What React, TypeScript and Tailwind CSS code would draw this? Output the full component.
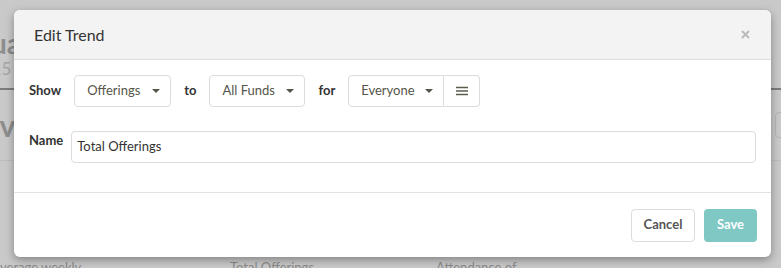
import { ReactNode } from "react";

const FONT = "font-['Lato','Open_Sans','Liberation_Sans',sans-serif]";

function Caret() {
  return (
    <svg width="8" height="4" viewBox="0 0 8 4" className="shrink-0">
      <path d="M0 0h8L4 4z" fill="#555549" />
    </svg>
  );
}

function Select({ label, w }: { label: string; w: string }) {
  return (
    <div
      className={`flex h-[32px] ${w} items-center justify-between rounded-[4px] border border-[#dcdcdc] bg-white pl-[12px] pr-[10px] text-[13px] text-[#555549]`}
    >
      <span>{label}</span>
      <Caret />
    </div>
  );
}

function Label({ children }: { children: ReactNode }) {
  return <span className="text-[13px] font-bold text-[#333]">{children}</span>;
}

export default function App() {
  return (
    <div className={`relative h-[268px] w-[781px] overflow-hidden bg-[#c9c9c9] ${FONT}`}>
      {/* page behind the overlay */}
      <div className="flex flex-col text-[#8e8e8e]">
        <div className="flex h-[90px] flex-col border-b-2 border-[#7c7c7c] pt-[26px]">
          <span className="ml-[-60px] text-[28px] font-bold leading-[34px]">Annua</span>
          <span className="ml-[-28px] text-[17px] leading-[18px] text-[#a5a5a5]">2015</span>
        </div>
        <div className="flex h-[71px] items-center justify-between border-b border-[#bdbdbd]">
          <span className="ml-[-44px] text-[30px] font-bold">Servi</span>
          <span className="mr-[-40px] h-[26px] w-[46px] rounded-[4px] border border-[#b5b5b5]" />
        </div>
        <div className="flex pt-[99px] text-[13px] leading-[14px] text-[#8a8a8a]">
          <span className="w-[230px]">verage weekly</span>
          <span className="w-[206px]">Total Offerings</span>
          <span>Attendance of</span>
        </div>
      </div>

      {/* modal */}
      <div className="absolute left-[14px] top-[10px] flex h-[247px] w-[757px] flex-col overflow-hidden rounded-[6px] bg-white shadow-[0_3px_9px_rgba(0,0,0,0.35)]">
        <div className="flex h-[50px] items-center justify-between border-b border-[#dedede] bg-[#f3f3f3] pl-[20px] pr-[21px]">
          <span className="text-[16px] text-[#333]">Edit Trend</span>
          <svg width="9" height="9" viewBox="0 0 9 9">
            <path d="M1 1l7 7M8 1L1 8" stroke="#b9b9b9" strokeWidth="1.8" />
          </svg>
        </div>

        <div className="flex h-[133px] flex-col gap-[24px] border-b border-[#e2e2e2] px-[15px] pt-[15px]">
          <div className="flex items-center gap-[13px]">
            <Label>Show</Label>
            <Select label="Offerings" w="w-[97px]" />
            <Label>to</Label>
            <Select label="All Funds" w="w-[96px]" />
            <Label>for</Label>
            <div className="flex">
              <div className="flex h-[32px] w-[96px] items-center justify-between rounded-l-[4px] border border-[#dcdcdc] pl-[12px] pr-[10px] text-[13px] text-[#555549]">
                <span>Everyone</span>
                <Caret />
              </div>
              <div className="flex h-[32px] w-[36px] items-center justify-center rounded-r-[4px] border border-l-0 border-[#dcdcdc]">
                <svg width="12" height="10" viewBox="0 0 12 10">
                  <path d="M0 1.5h12M0 5h12M0 8.5h12" stroke="#5b5e4d" strokeWidth="1.6" />
                </svg>
              </div>
            </div>
          </div>
          <div className="flex items-start gap-[8px]">
            <span className="leading-[16px]">
              <Label>Name</Label>
            </span>
            <div className="flex h-[32px] flex-1 items-center rounded-[4px] border border-[#dcdcdc] px-[5px] text-[13px] text-[#333]">
              Total Offerings
            </div>
          </div>
        </div>

        <div className="flex flex-1 items-center justify-end gap-[9px] pr-[14px]">
          <button className="h-[33px] w-[64px] rounded-[4px] border border-[#dcdcdc] bg-white text-[13px] font-bold text-[#555]">
            Cancel
          </button>
          <button className="h-[33px] w-[53px] rounded-[4px] bg-[#80c8c4] text-[13px] font-bold text-white">
            Save
          </button>
        </div>
      </div>
    </div>
  );
}
